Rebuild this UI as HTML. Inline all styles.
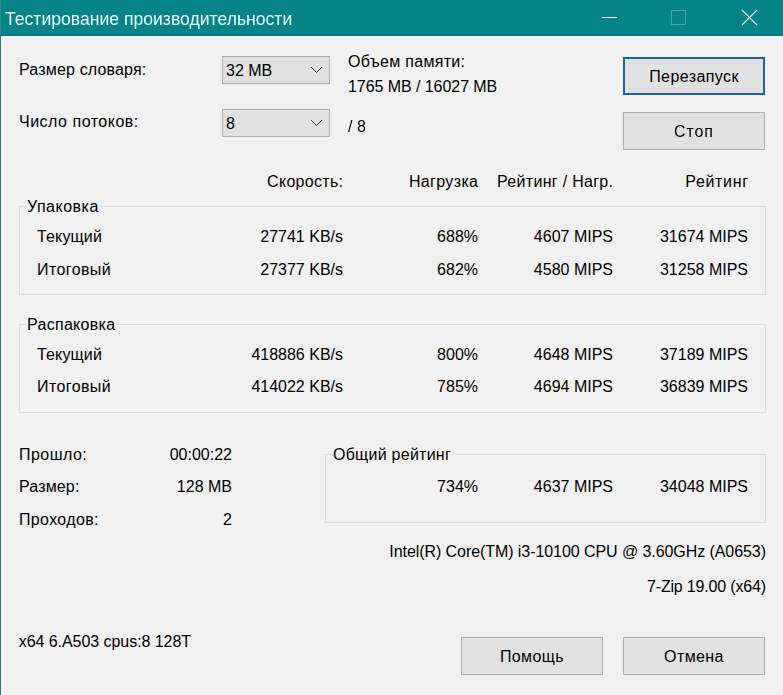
<!DOCTYPE html>
<html><head><meta charset="utf-8">
<style>
html,body{margin:0;padding:0}
body{width:783px;height:695px;position:relative;overflow:hidden;background:#f0f0f0;font-family:"Liberation Sans",sans-serif;font-size:16px;color:#000}
.tb{position:absolute;left:0;top:0;width:783px;height:35px;background:#058387;border-bottom:1px solid #137073}
.lb{position:absolute;left:0;top:36px;width:1px;height:659px;background:#3f6e6e}
.title{position:absolute;left:5px;top:9px;font-size:17.6px;line-height:20px;color:#eaffff;white-space:nowrap;will-change:transform}
.t{position:absolute;line-height:20px;white-space:nowrap}
.r{text-align:right}
.btn{position:absolute;box-sizing:border-box;border:1px solid #adadad;background:#e1e1e1;text-align:center}
.btn.f{border:2px solid #1d62a0}
.cb{position:absolute;box-sizing:border-box;border:1px solid #adadad;background:#e1e1e1}
.gb{position:absolute;box-sizing:border-box;border:1px solid #dcdcdc}
.gl{position:absolute;line-height:20px;white-space:nowrap;background:#f0f0f0;padding:0 1px}
</style></head><body>
<div class="tb"></div>
<div class="lb"></div>
<div style="position:absolute;left:0;top:0;width:1px;height:35px;background:#2a8b8e"></div>
<div style="position:absolute;left:1px;top:36px;width:1px;height:659px;background:#e6f8f8"></div>
<div style="position:absolute;left:1px;top:36px;width:782px;height:1px;background:#e8f8f8"></div>
<div class="title">Тестирование производительности</div>
<svg style="position:absolute;left:0;top:0" width="783" height="36">
<line x1="602" y1="17.5" x2="617" y2="17.5" stroke="#e6ffff" stroke-width="1"/>
<rect x="671.5" y="10.5" width="14" height="14" fill="none" stroke="#45a6a8" stroke-width="1"/>
<line x1="742" y1="10" x2="757" y2="25" stroke="#e6ffff" stroke-width="1.1"/>
<line x1="757" y1="10" x2="742" y2="25" stroke="#e6ffff" stroke-width="1.1"/>
</svg>

<div class="t" style="left:19px;top:60px;letter-spacing:0.17px">Размер словаря:</div>
<div class="cb" style="left:222px;top:56px;width:108px;height:28px"></div>
<div class="t" style="left:226px;top:61px">32 MB</div>
<div class="t" style="left:348px;top:52px;letter-spacing:0.3px">Объем памяти:</div>
<div class="t" style="left:348px;top:77px;letter-spacing:-0.06px">1765 MB / 16027 MB</div>
<div class="btn f" style="left:623px;top:57px;width:142px;height:38px"></div>
<div class="t" style="left:623px;width:142px;text-align:center;top:67px;letter-spacing:0.4px">Перезапуск</div>

<div class="t" style="left:19px;top:112px;letter-spacing:0.5px">Число потоков:</div>
<div class="cb" style="left:222px;top:109px;width:108px;height:28px"></div>
<div class="t" style="left:226px;top:114px">8</div>
<svg style="position:absolute;left:0;top:0" width="783" height="150">
<polyline points="311,67 316.5,72.5 322,67" fill="none" stroke="#383838" stroke-width="1"/>
<polyline points="311,120 316.5,125.5 322,120" fill="none" stroke="#383838" stroke-width="1"/>
</svg>
<div class="t" style="left:348px;top:117px">/ 8</div>
<div class="btn" style="left:623px;top:112px;width:142px;height:38px"></div>
<div class="t" style="left:623px;width:142px;text-align:center;top:122px;letter-spacing:0.9px">Стоп</div>

<div class="t r" style="right:439.70px;top:172px;letter-spacing:0.3px">Скорость:</div>
<div class="t r" style="right:304.65px;top:172px;letter-spacing:0.35px">Нагрузка</div>
<div class="t r" style="right:169.70px;top:172px;letter-spacing:0.3px">Рейтинг / Нагр.</div>
<div class="t r" style="right:34.35px;top:172px;letter-spacing:0.65px">Рейтинг</div>

<div class="gb" style="left:19px;top:206px;width:747px;height:89px"></div>
<div class="gl" style="left:26px;top:197px;letter-spacing:0.5px">Упаковка</div>
<div class="t" style="left:37px;top:227px;letter-spacing:0.15px">Текущий</div>
<div class="t r" style="right:440px;top:227px">27741 KB/s</div>
<div class="t r" style="right:305px;top:227px">688%</div>
<div class="t r" style="right:170px;top:227px">4607 MIPS</div>
<div class="t r" style="right:35px;top:227px">31674 MIPS</div>
<div class="t" style="left:37px;top:260px;letter-spacing:0.4px">Итоговый</div>
<div class="t r" style="right:440px;top:260px">27377 KB/s</div>
<div class="t r" style="right:305px;top:260px">682%</div>
<div class="t r" style="right:170px;top:260px">4580 MIPS</div>
<div class="t r" style="right:35px;top:260px">31258 MIPS</div>

<div class="gb" style="left:19px;top:324px;width:747px;height:89px"></div>
<div class="gl" style="left:26px;top:315px;letter-spacing:0.3px">Распаковка</div>
<div class="t" style="left:37px;top:345px;letter-spacing:0.15px">Текущий</div>
<div class="t r" style="right:440px;top:345px">418886 KB/s</div>
<div class="t r" style="right:305px;top:345px">800%</div>
<div class="t r" style="right:170px;top:345px">4648 MIPS</div>
<div class="t r" style="right:35px;top:345px">37189 MIPS</div>
<div class="t" style="left:37px;top:377px;letter-spacing:0.4px">Итоговый</div>
<div class="t r" style="right:440px;top:377px">414022 KB/s</div>
<div class="t r" style="right:305px;top:377px">785%</div>
<div class="t r" style="right:170px;top:377px">4694 MIPS</div>
<div class="t r" style="right:35px;top:377px">36839 MIPS</div>

<div class="t" style="left:19px;top:445px;letter-spacing:0.45px">Прошло:</div>
<div class="t r" style="right:551px;top:445px">00:00:22</div>
<div class="t" style="left:19px;top:477px;letter-spacing:0.15px">Размер:</div>
<div class="t r" style="right:551px;top:477px">128 MB</div>
<div class="t" style="left:19px;top:510px;letter-spacing:0.35px">Проходов:</div>
<div class="t r" style="right:551px;top:510px">2</div>

<div class="gb" style="left:325px;top:454px;width:441px;height:69px"></div>
<div class="gl" style="left:332px;top:445px;letter-spacing:0.25px">Общий рейтинг</div>
<div class="t r" style="right:305px;top:477px">734%</div>
<div class="t r" style="right:170px;top:477px">4637 MIPS</div>
<div class="t r" style="right:35px;top:477px">34048 MIPS</div>

<div class="t r" style="right:17.1px;top:542px;letter-spacing:-0.07px">Intel(R) Core(TM) i3-10100 CPU @ 3.60GHz (A0653)</div>
<div class="t r" style="right:17.2px;top:577px;letter-spacing:-0.18px">7-Zip 19.00 (x64)</div>

<div class="t" style="left:18.7px;top:632px;letter-spacing:-0.05px">x64 6.A503 cpus:8 128T</div>
<div class="btn" style="left:461px;top:637px;width:142px;height:38px"></div>
<div class="t" style="left:461px;width:142px;text-align:center;top:647px;letter-spacing:0.4px">Помощь</div>
<div class="btn" style="left:623px;top:637px;width:142px;height:38px"></div>
<div class="t" style="left:623px;width:142px;text-align:center;top:647px;letter-spacing:0.4px">Отмена</div>
</body></html>
